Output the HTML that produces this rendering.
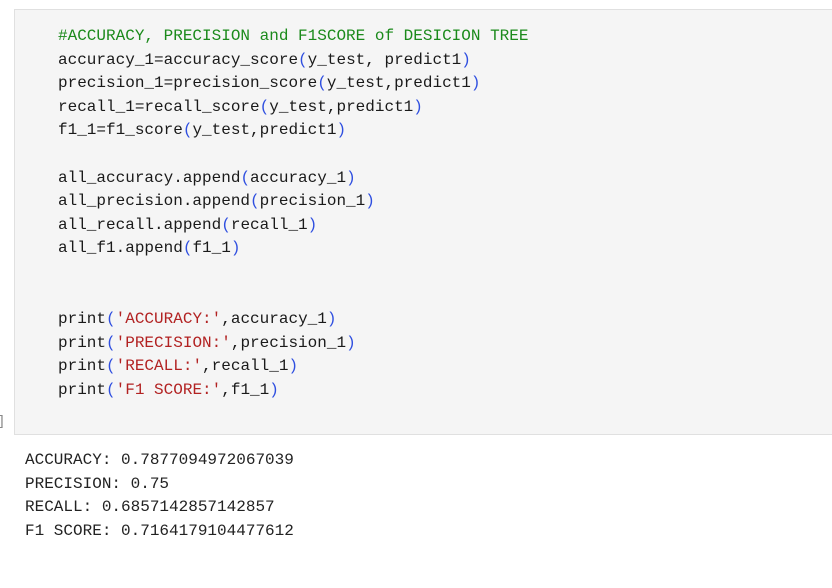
<!DOCTYPE html>
<html><head><meta charset="utf-8"><style>
body{margin:0;width:832px;height:588px;background:#fff;overflow:hidden;position:relative;font-family:"Liberation Mono",monospace;}
.cell{position:absolute;left:14px;top:9px;width:830px;height:426px;background:#f5f5f5;border:1px solid #e0e0e0;box-sizing:border-box;}
pre{margin:0;position:absolute;font-family:"Liberation Mono",monospace;font-size:16px;line-height:23.6px;color:#1a1a1a;}
.code{left:58px;top:25px;}
.out{left:25px;top:449px;color:#222;}
.c{color:#1b8a1b}.p{color:#2f4fe0}.s{color:#b22222}
.br{position:absolute;left:-3px;top:414px;font-size:14px;color:#888;}
</style></head><body>
<div class="cell"></div>
<div class="br">]</div>
<pre class="code"><span class="c">#ACCURACY, PRECISION and F1SCORE of DESICION TREE</span>
accuracy_1=accuracy_score<span class="p">(</span>y_test, predict1<span class="p">)</span>
precision_1=precision_score<span class="p">(</span>y_test,predict1<span class="p">)</span>
recall_1=recall_score<span class="p">(</span>y_test,predict1<span class="p">)</span>
f1_1=f1_score<span class="p">(</span>y_test,predict1<span class="p">)</span>

all_accuracy.append<span class="p">(</span>accuracy_1<span class="p">)</span>
all_precision.append<span class="p">(</span>precision_1<span class="p">)</span>
all_recall.append<span class="p">(</span>recall_1<span class="p">)</span>
all_f1.append<span class="p">(</span>f1_1<span class="p">)</span>


print<span class="p">(</span><span class="s">'ACCURACY:'</span>,accuracy_1<span class="p">)</span>
print<span class="p">(</span><span class="s">'PRECISION:'</span>,precision_1<span class="p">)</span>
print<span class="p">(</span><span class="s">'RECALL:'</span>,recall_1<span class="p">)</span>
print<span class="p">(</span><span class="s">'F1 SCORE:'</span>,f1_1<span class="p">)</span></pre>
<pre class="out">ACCURACY: 0.7877094972067039
PRECISION: 0.75
RECALL: 0.6857142857142857
F1 SCORE: 0.7164179104477612</pre>
</body></html>
